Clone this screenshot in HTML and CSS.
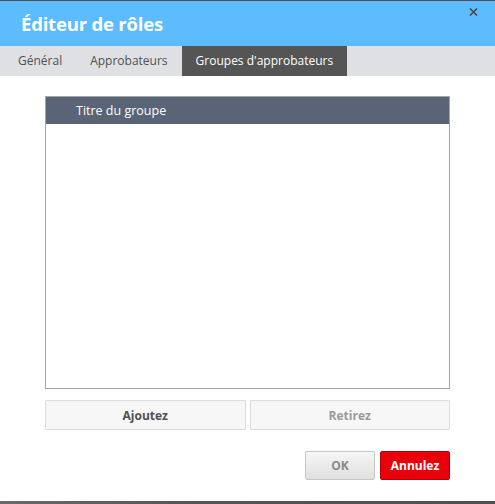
FILE: index.html
```html
<!DOCTYPE html>
<html lang="fr">
<head>
<meta charset="utf-8">
<title>Éditeur de rôles</title>
<link rel="stylesheet" href="styles.css">
</head>
<body>
<div class="dialog">
  <div class="topline"></div>
  <header class="header">
    <h1 class="title">Éditeur de rôles</h1>
    <button class="close" aria-label="Fermer">
      <svg width="9" height="8" viewBox="0 0 9 8"><path d="M1 0.5 L8 7.5 M8 0.5 L1 7.5" stroke="#4a4a4a" stroke-width="1.6" fill="none"/></svg>
    </button>
  </header>
  <nav class="tabs">
    <span class="tab">Général</span>
    <span class="tab">Approbateurs</span>
    <span class="tab tab-active">Groupes d'approbateurs</span>
  </nav>
  <main class="content">
    <div class="grid">
      <div class="grid-head">Titre du groupe</div>
      <div class="grid-body"></div>
    </div>
    <div class="actions">
      <button class="btn-action">Ajoutez</button>
      <button class="btn-action btn-disabled">Retirez</button>
    </div>
    <div class="footer">
      <button class="btn btn-ok">OK</button>
      <button class="btn btn-cancel">Annulez</button>
    </div>
  </main>
  <div class="bottomline"></div>
</div>
</body>
</html>
```
FILE: styles.css
```css
html, body {
  margin: 0;
  padding: 0;
  background: #ffffff;
}
body {
  font-family: "Open Sans", "Noto Sans", sans-serif;
}
.dialog {
  width: 495px;
  height: 504px;
  display: flex;
  flex-direction: column;
}
.topline {
  height: 1px;
  background: #4f4f4f;
}
.header {
  position: relative;
  height: 45px;
  background: #5cbcfe;
  display: flex;
  align-items: center;
  padding-left: 21px;
}
.title {
  margin: 0;
  color: #ffffff;
  font-size: 18.5px;
  font-weight: 700;
  letter-spacing: -0.2px;
}
.close {
  position: absolute;
  top: 7px;
  right: 17px;
  border: 0;
  background: transparent;
  padding: 0;
  width: 9px;
  height: 8px;
  display: flex;
}
.tabs {
  height: 30px;
  background: #dfe0e4;
  display: flex;
  padding-left: 4px;
}
.tab {
  padding: 0 14px;
  line-height: 30px;
  font-size: 12px;
  color: #505050;
}
.tab-active {
  background: #555555;
  color: #ffffff;
}
.content {
  flex: 1;
  padding: 20px 45px 0 45px;
  display: flex;
  flex-direction: column;
}
.grid {
  height: 293px;
  box-sizing: border-box;
  border: 1px solid #a5a5a5;
  display: flex;
  flex-direction: column;
}
.grid-head {
  height: 27px;
  background: #5a6477;
  color: #ffffff;
  font-size: 12.5px;
  line-height: 27px;
  padding-left: 30px;
}
.grid-body {
  flex: 1;
}
.actions {
  margin-top: 11px;
  display: flex;
  gap: 4px;
}
.btn-action {
  flex: 1;
  height: 30px;
  background: #f7f7f7;
  border: 1px solid #dcdcdc;
  border-radius: 1px;
  font-family: inherit;
  font-size: 12px;
  font-weight: 700;
  color: #505050;
  padding: 0;
}
.btn-disabled {
  color: #9a9a9a;
}
.footer {
  margin-top: 21px;
  display: flex;
  justify-content: flex-end;
  gap: 5px;
}
.btn {
  width: 70px;
  height: 29px;
  border-radius: 2px;
  font-family: inherit;
  font-size: 12px;
  font-weight: 700;
  padding: 0;
}
.btn-ok {
  background: linear-gradient(#f6f6f6, #e0e0e0);
  border: 1px solid #c6c6c6;
  color: #8a8a8a;
}
.btn-cancel {
  background: #e8000b;
  border: 1px solid #b8000a;
  color: #ffffff;
}
.bottomline {
  height: 3px;
  background: linear-gradient(90deg, #6a6a6a, #555555 40%, #505050);
}
```
